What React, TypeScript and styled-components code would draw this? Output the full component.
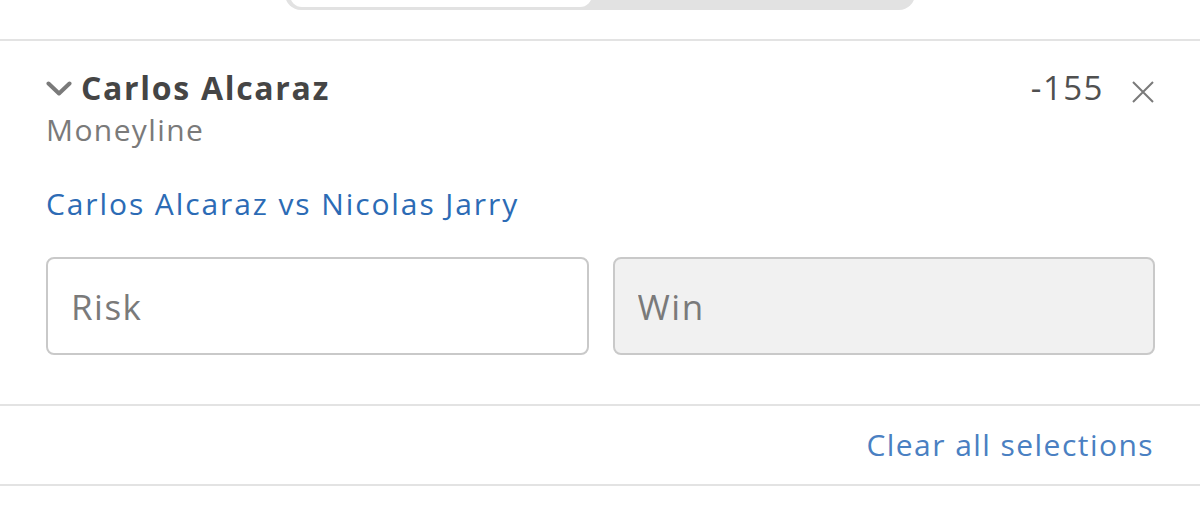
import React from 'react'
import styled, { createGlobalStyle } from 'styled-components'

const GlobalStyle = createGlobalStyle`
    html, body {
        margin: 0;
        padding: 0;
        background: #ffffff;
    }
    body {
        font-family: "Open Sans", "Liberation Sans", sans-serif;
        color: #444444;
    }
`;

const App = () => {
    return (
        <Page>
            <GlobalStyle />
            <ToggleRow>
                <Toggle role="tablist">
                    <ToggleOption active aria-label="Straight" />
                    <ToggleOption aria-label="Parlay" />
                </Toggle>
            </ToggleRow>
            <Divider />
            <Selection>
                <SelectionHeader>
                    <TitleGroup>
                        <Chevron viewBox="0 0 26 16" aria-hidden="true">
                            <path d="M2.5 2.5 L13 12.5 L23.5 2.5" />
                        </Chevron>
                        <Title>Carlos Alcaraz</Title>
                    </TitleGroup>
                    <OddsGroup>
                        <Odds>-155</Odds>
                        <RemoveButton aria-label="Remove selection">
                            <svg viewBox="0 0 24 24">
                                <path d="M2 2 L22 22 M22 2 L2 22" />
                            </svg>
                        </RemoveButton>
                    </OddsGroup>
                </SelectionHeader>
                <Market>Moneyline</Market>
                <EventLink href="#">Carlos Alcaraz vs Nicolas Jarry</EventLink>
                <Inputs>
                    <Field placeholder="Risk" />
                    <Field placeholder="Win" disabled readOnly />
                </Inputs>
            </Selection>
            <Divider />
            <Footer>
                <ClearLink href="#">Clear all selections</ClearLink>
            </Footer>
            <Divider />
        </Page>
    )
}

export default App

const Page = styled.div`
    width: 1200px;
    height: 530px;
    overflow: hidden;
`;

const ToggleRow = styled.div`
    display: flex;
    justify-content: center;
    height: 39px;
`;

const Toggle = styled.div`
    display: flex;
    width: 630px;
    height: 50px;
    margin-top: -40px;
    padding: 0 5px 3px 5px;
    box-sizing: border-box;
    background: #e2e2e2;
    border-radius: 0 0 16px 16px;
`;

const ToggleOption = styled.div<{ active?: boolean }>`
    flex: ${p => (p.active ? '0 0 302px' : '1')};
    border-radius: 0 0 12px 12px;
    background: ${p => (p.active ? '#ffffff' : 'transparent')};
`;

const Divider = styled.hr`
    margin: 0;
    border: none;
    height: 2px;
    background: #e3e3e3;
`;

const Selection = styled.section`
    padding: 27px 45px 49px 46px;
`;

const SelectionHeader = styled.div`
    display: flex;
    justify-content: space-between;
    align-items: center;
    height: 40px;
`;

const TitleGroup = styled.div`
    display: flex;
    align-items: center;
    gap: 9px;
`;

const Chevron = styled.svg`
    width: 26px;
    height: 16px;
    margin-top: 2px;
    fill: none;
    stroke: #7a7a7a;
    stroke-width: 4;
    stroke-linecap: round;
    stroke-linejoin: round;
`;

const Title = styled.h2`
    margin: 0;
    font-size: 32px;
    font-weight: 700;
    letter-spacing: 1.7px;
    line-height: 40px;
    color: #454545;
`;

const OddsGroup = styled.div`
    display: flex;
    align-items: center;
    gap: 27px;
`;

const Odds = styled.span`
    font-size: 33px;
    letter-spacing: 1.5px;
    line-height: 40px;
    color: #505050;
`;

const RemoveButton = styled.button`
    display: flex;
    padding: 0;
    border: none;
    background: none;
    margin-top: 8px;

    svg {
        width: 24px;
        height: 24px;
        fill: none;
        stroke: #7a7a7a;
        stroke-width: 2;
    }
`;

const Market = styled.div`
    margin-top: 2px;
    font-size: 30px;
    letter-spacing: 1.4px;
    line-height: 40px;
    color: #7a7a7a;
`;

const EventLink = styled.a`
    display: block;
    margin-top: 34px;
    font-size: 30px;
    letter-spacing: 1.9px;
    line-height: 40px;
    color: #2c6bb5;
    text-decoration: none;
`;

const Inputs = styled.div`
    display: grid;
    grid-template-columns: 1fr 1fr;
    gap: 24px;
    margin-top: 33px;
`;

const Field = styled.input`
    box-sizing: border-box;
    width: 100%;
    height: 98px;
    padding: 0 23px;
    border: 2px solid #c9c9c9;
    border-radius: 8px;
    font-family: "Open Sans", "Liberation Sans", sans-serif;
    font-size: 35px;
    letter-spacing: 1.5px;
    color: #444444;
    background: #ffffff;
    outline: none;

    &::placeholder {
        color: #7a7a7a;
    }

    &:disabled {
        background: #f1f1f1;
    }
`;

const Footer = styled.div`
    display: flex;
    justify-content: flex-end;
    padding: 21px 46px 21px 46px;
`;

const ClearLink = styled.a`
    font-size: 30px;
    letter-spacing: 1.45px;
    line-height: 36px;
    color: #4a80c2;
    text-decoration: none;
`;
